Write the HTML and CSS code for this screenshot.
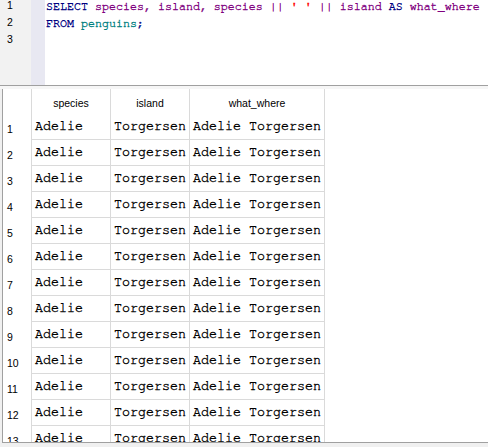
FILE: index.html
```html
<!DOCTYPE html>
<html>
<head>
<meta charset="utf-8">
<link rel="stylesheet" href="styles.css">
</head>
<body>
<div class="app">
  <div class="editor">
    <div class="gutter">
      <div class="ln">1</div>
      <div class="ln">2</div>
      <div class="ln">3</div>
    </div>
    <div class="fold"></div>
    <div class="code">
      <div class="line"><span class="kw">SELECT</span> <span class="id">species, island, species ||</span> <span class="str">' '</span> <span class="id">|| island</span> <span class="kw">AS</span> <span class="id">what_where</span></div>
      <div class="line"><span class="kw">FROM</span> <span class="tbl">penguins</span><span class="kw">;</span></div>
      <div class="line">&nbsp;</div>
    </div>
  </div>
  <div class="splitter"></div>
  <div class="results-wrap">
    <div class="results">
      <div class="grid" id="grid">
        <div class="hc rn"></div>
        <div class="hc">species</div>
        <div class="hc">island</div>
        <div class="hc">what_where</div>
      </div>
    </div>
  </div>
</div>
<script src="app.js"></script>
</body>
</html>
```
FILE: app.js
```js
var grid = document.getElementById('grid');
for (var i = 1; i <= 13; i++) {
  var rn = document.createElement('div');
  rn.className = 'cell rn';
  rn.textContent = i;
  grid.appendChild(rn);
  var vals = ['Adelie', 'Torgersen', 'Adelie Torgersen'];
  for (var j = 0; j < vals.length; j++) {
    var c = document.createElement('div');
    c.className = 'cell data';
    c.textContent = vals[j];
    grid.appendChild(c);
  }
}
```
FILE: styles.css
```css
html, body {
  margin: 0;
  padding: 0;
  background: #ffffff;
}
.app {
  width: 488px;
  height: 447px;
  overflow: hidden;
  display: flex;
  flex-direction: column;
}
.editor {
  height: 85px;
  display: flex;
  background: #ffffff;
  overflow: hidden;
  flex: none;
}
.gutter {
  width: 31px;
  background: #f2f2f2;
  padding-left: 7px;
  box-sizing: border-box;
  padding-top: 0;
}
.ln {
  font-family: "Liberation Sans", Arial, sans-serif;
  font-size: 10.5px;
  line-height: 17px;
  height: 17px;
  color: #000;
  position: relative;
  top: -3px;
}
.fold {
  width: 14px;
  background: #e8e8f2;
}
.code {
  flex: 1;
  padding-left: 1px;
  margin-top: -2px;
}
.line {
  font-family: "Nimbus Mono PS", "Nimbus Mono L", "FreeMono", "Courier New", "Liberation Mono", monospace;
  font-size: 11.67px;
  line-height: 17px;
  height: 17px;
  white-space: pre;
  -webkit-text-stroke: 0.35px currentColor;
}
.kw { color: #000080; }
.id { color: #800080; }
.str { color: #ff0000; }
.tbl { color: #008080; }
.splitter {
  flex: none;
  height: 3px;
  border-top: 1px solid #a0a0a0;
  background: #f6f6f6;
}
.results-wrap {
  flex: none;
  background: #f0f0f0;
  padding-left: 2px;
  height: 359px;
}
.results {
  height: 353px;
  border-left: 1px solid #a0a0a0;
  border-bottom: 1px solid #a0a0a0;
  background: #ffffff;
  overflow: hidden;
}
.grid {
  display: grid;
  grid-template-columns: 29px 79px 79px 135px;
  grid-template-rows: 25px;
  grid-auto-rows: 26px;
}
.hc, .cell {
  box-sizing: border-box;
  border-right: 1px solid #dadada;
  white-space: nowrap;
  overflow: hidden;
}
.hc {
  font-family: "Liberation Sans", Arial, sans-serif;
  font-size: 10.5px;
  line-height: 25px;
  padding-top: 2px;
  text-align: center;
  color: #000;
}
.cell.rn {
  font-family: "Liberation Sans", Arial, sans-serif;
  font-size: 10.5px;
  line-height: 25px;
  padding-left: 4px;
  padding-top: 3px;
  color: #000;
}
.cell.data {
  font-family: "Nimbus Mono PS", "Nimbus Mono L", "FreeMono", "Courier New", "Liberation Mono", monospace;
  font-size: 13.33px;
  line-height: 25px;
  padding-left: 3px;
  border-bottom: 1px solid #dadada;
  color: #000;
  -webkit-text-stroke: 0.35px currentColor;
}
```
